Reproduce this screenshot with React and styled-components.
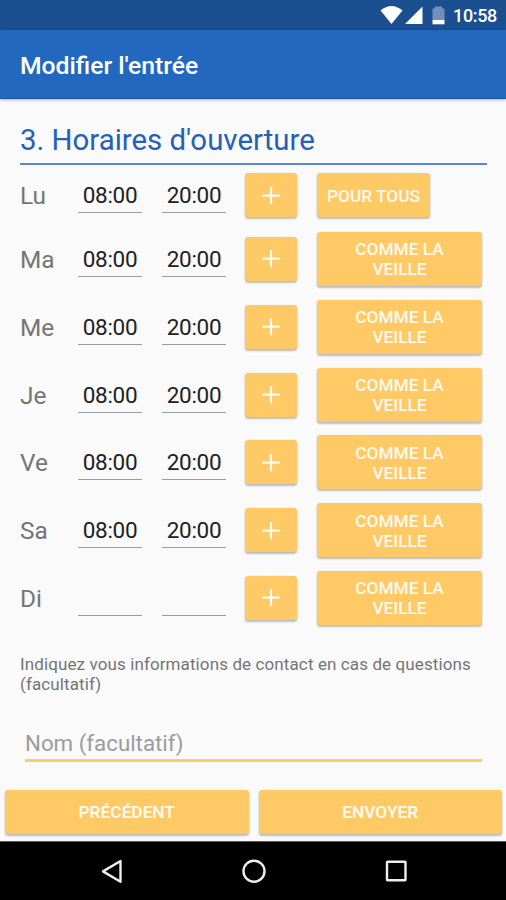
import React from "react";
import styled, { createGlobalStyle } from "styled-components";

const GlobalStyle = createGlobalStyle`
  * { box-sizing: border-box; }
  body { margin: 0; background: #fafafa; font-family: Roboto, sans-serif; }
`;

const Screen = styled.div`
  width: 506px;
  height: 900px;
  display: flex;
  flex-direction: column;
  background: #fafafa;
  overflow: hidden;
`;

const StatusBar = styled.header`
  height: 30px;
  flex: none;
  display: flex;
  align-items: center;
  justify-content: flex-end;
  padding-right: 9px;
  background: #1b4f8f;
  color: #fff;
`;

const StatusIcons = styled.svg`
  width: 74px;
  height: 30px;
  display: block;
`;

const Clock = styled.span`
  width: 44px;
  font-size: 18px;
  line-height: 32px;
  padding-top: 2px;
  font-weight: 500;
  letter-spacing: -0.35px;
  white-space: nowrap;
`;

const AppBar = styled.div`
  height: 69px;
  flex: none;
  display: flex;
  align-items: center;
  padding: 3px 20px 0;
  background: #2268be;
  border-bottom: 1px solid #1858a8;
  box-shadow: 0 1px 3px rgba(0, 0, 0, 0.3);
`;

const Title = styled.h1`
  margin: 0;
  color: #fff;
  font-size: 24.7px;
  line-height: 30px;
  font-weight: 500;
  white-space: nowrap;
`;

const Content = styled.main`
  flex: 1;
  padding: 20px 19px 0 20px;
`;

const Heading = styled.h2`
  margin: 0;
  height: 46px;
  border-bottom: 2px solid #5c87cb;
  color: #2560b8;
  font-size: 29.4px;
  line-height: 42px;
  font-weight: 400;
  white-space: nowrap;
`;

const Row = styled.div`
  height: ${(p) => (p.$first ? "60.1px" : "67.8px")};
  display: grid;
  grid-template-columns: 58px 84px 83px 72px 165px;
  align-items: center;
`;

const Day = styled.span`
  color: #757575;
  font-size: 24.4px;
  line-height: 30px;
  padding-top: 2px;
`;

const TimeField = styled.div`
  width: 64px;
  height: 36px;
  border-bottom: 1.5px solid #9c9c9c;
  color: #212121;
  font-size: 22.5px;
  letter-spacing: -0.3px;
  line-height: 36px;
  text-align: center;
`;

const Button = styled.button`
  width: ${(p) => p.$width || "100%"};
  height: ${(p) => p.$height || 44}px;
  flex: ${(p) => (p.$grow ? 1 : "none")};
  display: flex;
  align-items: center;
  justify-content: center;
  padding: ${(p) => (p.$grow ? 0 : "1px")} 0 0;
  border: 0;
  border-radius: 3px;
  background: #ffc966;
  color: #fffaf0;
  box-shadow: 0 2px 2px rgba(0, 0, 0, 0.24), 0 0 2px rgba(0, 0, 0, 0.08);
  font: ${(p) => (p.$grow ? 600 : 500)} 17.3px/20px Roboto, sans-serif;
  text-align: center;
`;

const Plus = styled.svg`
  width: 18px;
  height: 18px;
`;

const Note = styled.p`
  margin: 21.9px 0 0;
  color: #757575;
  font-size: 17px;
  letter-spacing: 0.11px;
  line-height: 20px;
  white-space: nowrap;
`;

const NameField = styled.div`
  height: 41px;
  margin: 27px 5px 0;
  border-bottom: 3px solid #fbcd68;
  color: #9c9c9c;
  font-size: 22.3px;
  line-height: 44px;
`;

const Actions = styled.div`
  height: 51px;
  flex: none;
  display: flex;
  gap: 10px;
  padding: 0 4px 0 5px;
`;

const NavBar = styled.nav`
  height: 59px;
  flex: none;
  background: #000;
  border-top: 1px solid #5a5a5a;
`;

const NavIcons = styled.svg`
  display: block;
  width: 506px;
  height: 58px;
`;

const days = [
  ["Lu", "08:00", "20:00"],
  ["Ma", "08:00", "20:00"],
  ["Me", "08:00", "20:00"],
  ["Je", "08:00", "20:00"],
  ["Ve", "08:00", "20:00"],
  ["Sa", "08:00", "20:00"],
  ["Di", "", ""],
];

function DayRow({ day, open, close, first }) {
  return (
    <Row $first={first}>
      <Day>{day}</Day>
      <TimeField>{open}</TimeField>
      <TimeField>{close}</TimeField>
      <Button $width="52px" aria-label="+">
        <Plus viewBox="0 0 18 18" stroke="#fffaf0" strokeWidth="2.2" fill="none">
          <path d="M9 0v17.2M0.3 8.6h17.4" />
        </Plus>
      </Button>
      {first ? (
        <Button $width="113px">POUR TOUS</Button>
      ) : (
        <Button $height={54}>
          <span>COMME LA<br />VEILLE</span>
        </Button>
      )}
    </Row>
  );
}

export default function App() {
  return (
    <Screen>
      <GlobalStyle />
      <StatusBar>
        <StatusIcons viewBox="0 0 74 30">
          <path d="M1.5 10.5Q12.5 1.5 23.5 10.5L12.5 24Z" fill="#fff" />
          <path d="M43.5 6.5V24H26Z" fill="#fff" />
          <path d="M53.5 8.5h2.5V6.5h7v2H65.5V20H53.5Z" fill="#7190ba" />
          <path d="M53.5 20h12v4.3h-12Z" fill="#fff" />
        </StatusIcons>
        <Clock>10:58</Clock>
      </StatusBar>
      <AppBar>
        <Title>Modifier l'entrée</Title>
      </AppBar>
      <Content>
        <Heading>3. Horaires d'ouverture</Heading>
        {days.map(([day, open, close], i) => (
          <DayRow key={day} day={day} open={open} close={close} first={i === 0} />
        ))}
        <Note>
          Indiquez vous informations de contact en cas de questions
          <br />
          (facultatif)
        </Note>
        <NameField>Nom (facultatif)</NameField>
      </Content>
      <Actions>
        <Button $grow>PRÉCÉDENT</Button>
        <Button $grow>ENVOYER</Button>
      </Actions>
      <NavBar>
        <NavIcons viewBox="0 0 506 58" fill="none" stroke="#eee" strokeWidth="2.4">
          <path d="M120.5 19V39.8L103 29.4Z" strokeLinejoin="round" />
          <circle cx="254" cy="29.2" r="10.5" />
          <rect x="387" y="19.7" width="18.5" height="18.5" rx="0.5" />
        </NavIcons>
      </NavBar>
    </Screen>
  );
}
